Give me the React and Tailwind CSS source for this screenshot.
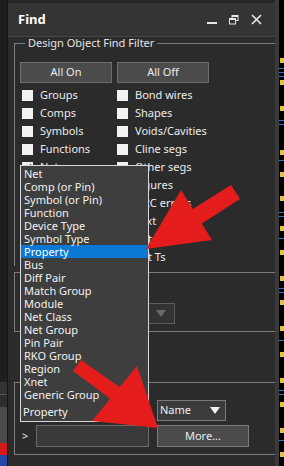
import React from "react";

const leftItems = ["Groups", "Comps", "Symbols", "Functions", "Nets", "", "", "", "", ""];
const rightItems = ["Bond wires", "Shapes", "Voids/Cavities", "Cline segs", "Other segs", "Figures", "DRC errors", "Text", "Ratsnest", "Rat Ts"];
const listItems = ["Net", "Comp (or Pin)", "Symbol (or Pin)", "Function", "Device Type", "Symbol Type", "Property", "Bus", "Diff Pair", "Match Group", "Module", "Net Class", "Net Group", "Pin Pair", "RKO Group", "Region", "Xnet", "Generic Group"];
const dots = [58, 80, 106, 150, 172, 196, 226, 250, 276, 300, 326, 352, 378, 402, 428, 452];

function Check({ label, checked }) {
  if (!label) return <div className="h-[18px]" />;
  return (
    <div className="h-[18px] flex items-center gap-[7px]">
      <div className="w-[11px] h-[11px] bg-[#f2f2f2] flex items-center justify-center">
        {checked && (
          <svg width="9" height="9" viewBox="0 0 9 9">
            <path d="M1 4.5 L3.5 7 L8 1.5" stroke="#222" strokeWidth="1.6" fill="none" />
          </svg>
        )}
      </div>
      <span className="text-[11px] leading-[14px] text-[#ececec] whitespace-nowrap">{label}</span>
    </div>
  );
}

export default function App() {
  return (
    <div className="w-[284px] h-[466px] relative flex overflow-hidden bg-[#2b2b2b] font-['Noto_Sans',sans-serif]">
      {/* left strip */}
      <div className="w-[8px] h-full flex flex-col bg-[#1e1e1e] border-r border-[#151515]">
        <div className="flex-1" />
        <div className="h-[12px] bg-[#333]" />
        <div className="h-[1px] bg-[#555]" />
        <div className="h-[12px] bg-[#2d2d2d]" />
        <div className="h-[36px] bg-[#4a4a4a]" />
        <div className="h-[12px] bg-[#d81818]" />
        <div className="h-[11px] bg-[#2447a8]" />
      </div>

      {/* main panel */}
      <div className="w-[267px] h-full flex flex-col overflow-hidden">
        <div className="h-[3px] bg-[#262626]" />
        <div className="h-[33px] bg-[#343434] flex items-center pl-[10px] pr-[13px]">
          <span className="text-[13px] font-bold text-white leading-none">Find</span>
          <div className="ml-auto flex items-center gap-[12px]">
            <svg width="10" height="10" viewBox="0 0 10 10">
              <rect x="0" y="7" width="10" height="2" fill="#e6e6e6" />
            </svg>
            <svg width="10" height="10" viewBox="0 0 10 10">
              <rect x="3" y="0.5" width="6" height="5" stroke="#e6e6e6" fill="none" />
              <rect x="0.5" y="3.5" width="6" height="5.5" stroke="#e6e6e6" fill="#343434" />
              <rect x="0.5" y="3.5" width="6" height="1.5" fill="#e6e6e6" />
              <rect x="3" y="0.5" width="6" height="1.5" fill="#e6e6e6" />
            </svg>
            <svg width="11" height="11" viewBox="0 0 11 11">
              <path d="M1 1 L10 10 M10 1 L1 10" stroke="#eaeaea" strokeWidth="1.6" />
            </svg>
          </div>
        </div>
        <div className="h-[1px] bg-[#474747]" />

        {/* Design Object Find Filter */}
        <fieldset className="ml-[6px] w-[290px] shrink-0 border-l border-t border-[#7d7d7d] pt-[13px] pl-[5px]">
          <legend className="ml-[5px] px-[3px] text-[11px] leading-[12px] text-[#e4e4e4]">Design Object Find Filter</legend>
          <div className="flex gap-[5px]">
            <button className="w-[92px] h-[21px] bg-[#4b4b4b] border border-[#6e6e6e] text-[11px] text-[#ececec]">All On</button>
            <button className="w-[92px] h-[21px] bg-[#4b4b4b] border border-[#6e6e6e] text-[11px] text-[#ececec]">All Off</button>
          </div>
          <div className="mt-[3px] grid grid-cols-[95px_1fr] pl-[2px]">
            {rightItems.map((r, i) => (
              <React.Fragment key={i}>
                <Check label={leftItems[i]} checked={i === 4} />
                <Check label={r} />
              </React.Fragment>
            ))}
          </div>
        </fieldset>

        {/* Find By Query */}
        <fieldset className="ml-[6px] w-[290px] shrink-0 border border-[#7d7d7d] pt-[25px] pb-[7px] pl-[5px]">
          <legend className="ml-[5px] px-[3px] text-[11px] leading-[12px] text-[#e4e4e4]">Find By Query</legend>
          <div className="w-[155px] h-[21px] border border-[#5c5c5c] bg-[#333] flex items-center justify-end pr-[8px]">
            <svg width="10" height="7" viewBox="0 0 10 7">
              <path d="M0 0 L10 0 L5 7 Z" fill="#6a6a6a" />
            </svg>
          </div>
        </fieldset>

        {/* Find By Name */}
        <fieldset className="mt-[44px] ml-[6px] w-[290px] shrink-0 border border-[#7d7d7d] pt-[13px] pb-[7px] pl-[5px]">
          <legend className="ml-[5px] px-[3px] text-[11px] leading-[12px] text-[#e4e4e4]">Find By Name</legend>
          <div className="flex items-start gap-[8px]">
            <div className="relative w-[129px] h-[21px]">
              <div className="absolute left-0 bottom-[20px] w-[129px] bg-[#3e3e3e] border border-b-0 border-[#d8d8d8] pt-[1px] pb-[1px]">
                {listItems.map((t) => (
                  <div
                    key={t}
                    className={`h-[13px] pl-[3px] text-[11px] leading-[13px] whitespace-nowrap ${t === "Property" ? "bg-[#0a78d4] text-white" : "text-[#f2f2f2]"}`}
                  >
                    {t}
                  </div>
                ))}
              </div>
              <div className="w-[129px] h-[21px] border border-[#d8d8d8] bg-[#3e3e3e] pl-[2px] text-[11px] leading-[19px] text-[#f2f2f2]">Property</div>
            </div>
            <div className="w-[69px] h-[21px] -mt-[1px] border border-[#7a7a7a] bg-[#3b3b3b] flex items-center pl-[2px] pr-[5px]">
              <span className="text-[11px] text-[#f0f0f0]">Name</span>
              <svg className="ml-auto" width="10" height="7" viewBox="0 0 10 7">
                <path d="M0 0 L10 0 L5 7 Z" fill="#f2f2f2" />
              </svg>
            </div>
          </div>
          <div className="mt-[3px] flex items-center">
            <span className="w-[16px] pl-[2px] text-[11px] text-[#e8e8e8]">&gt;</span>
            <div className="w-[113px] h-[22px] border border-[#6b6b6b] bg-[#3a3a3a]" />
            <button className="ml-[8px] w-[92px] h-[22px] bg-[#4b4b4b] border border-[#7a7a7a] text-[11px] text-[#ececec]">More...</button>
          </div>
        </fieldset>
      </div>

      {/* right canvas edge */}
      <div className="w-[4px] h-full bg-[#3a3a3a]" />
      <svg width="5" height="466" viewBox="0 0 5 466" className="bg-black">
        {dots.map((y) => (
          <rect key={y} x="1" y={y} width="4" height="5" fill="#e5c43a" />
        ))}
        {[68, 72, 76, 120, 124, 160, 212, 216, 238, 288, 292, 340, 390, 394, 440].map((y) => (
          <rect key={"b" + y} x="0" y={y} width="5" height="1" fill="#2f6fd6" />
        ))}
      </svg>

      {/* red arrows */}
      <svg className="absolute left-0 top-0 pointer-events-none" width="284" height="466" viewBox="0 0 284 466">
        <polygon points="146,249 181,190 212,240" fill="#e41c1c" />
        <polygon points="188,212 231,185 240,199 198,226" fill="#e41c1c" />
        <polygon points="158,428 137,366 92,421" fill="#e41c1c" />
        <polygon points="73,371 81,360 121,388 112,400" fill="#e41c1c" />
      </svg>
    </div>
  );
}
